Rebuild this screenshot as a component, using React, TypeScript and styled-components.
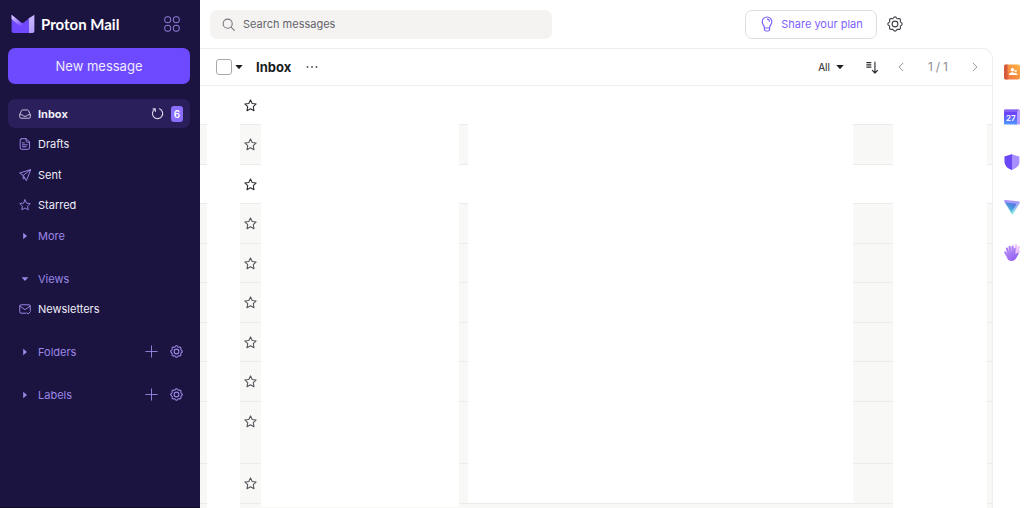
import React from 'react';
import styled, { createGlobalStyle } from 'styled-components';

const GlobalStyle = createGlobalStyle`
  *, *::before, *::after { box-sizing: border-box; }
  body { margin: 0; background: #fff; overflow: hidden; }
  body, button, input, select { font-family: Inter, 'Liberation Sans', sans-serif; }
  button { margin: 0; padding: 0; border: 0; background: none; color: inherit; cursor: pointer; }
  svg { display: block; flex: none; }
  h1, ul { margin: 0; padding: 0; }
  ul { list-style: none; }
`;

const Shell = styled.div`
  display: grid;
  grid-template-columns: 200px minmax(0, 1fr);
  height: 100vh;
  overflow: hidden;
  color: #1b1b22;
`;

/* Sidebar */

const Sidebar = styled.aside`
  display: flex;
  flex-direction: column;
  padding: 0 10px 0 8px;
  border-bottom: 1px solid #0f0a26;
  background: #1b1340;
  color: #f1effa;
`;

const Brand = styled.div`
  display: flex;
  align-items: center;
  justify-content: space-between;
  height: 48px;
  padding: 0 10px 0 3px;
`;

const BrandLink = styled.a`
  display: flex;
  align-items: center;
  gap: 6px;
  color: #fff;
  font: 700 15px/20px Lato, Inter, sans-serif;
  text-decoration: none;
`;

const ComposeButton = styled.button`
  height: 36px;
  border-radius: 7px;
  background: #6d4aff;
  color: #efeaff;
  font-size: 13px;
  line-height: 20px;
`;

const Nav = styled.nav`
  display: flex;
  flex-direction: column;
  gap: 14px;
  padding-top: 15px;
`;

const NavGroup = styled.ul`
  display: flex;
  flex-direction: column;
  gap: 2px;
`;

const NavRow = styled.li<{ $active?: boolean; $heading?: boolean }>`
  display: flex;
  align-items: center;
  height: ${p => (p.$active || p.$heading ? 29 : 28)}px;
  padding: 0 7px 0 11px;
  border-radius: 7px;
  background: ${p => (p.$active ? '#2a1f5a' : 'transparent')};
  color: ${p => (p.$heading ? '#9c88e6' : '#efedf7')};
  font-weight: ${p => (p.$active ? 700 : 400)};
  &:nth-child(3) { height: 29px; }
`;

const navLabel = `
  display: flex;
  flex: 1;
  align-items: center;
  gap: 7px;
  color: inherit;
  font-size: 11px;
  font-weight: inherit;
  line-height: 16px;
  text-align: left;
  text-decoration: none;
`;

const NavLink = styled.a<{ $tint: string }>`
  ${navLabel}
  svg { color: ${p => p.$tint}; }
`;

const NavToggle = styled.button`
  ${navLabel}
`;

const IconButton = styled.button<{ $color: string; $gap?: number }>`
  display: grid;
  place-items: center;
  margin-left: ${p => p.$gap ?? 0}px;
  color: ${p => p.$color};
`;

const Badge = styled.span`
  margin-left: 7px;
  width: 12px;
  border-radius: 3px;
  background: #8a6eff;
  color: #fff;
  font-size: 10px;
  font-weight: 600;
  line-height: 16px;
  text-align: center;
`;

/* Top bar */

const Main = styled.main`
  display: flex;
  flex-direction: column;
  min-width: 0;
  min-height: 0;
`;

const TopBar = styled.header`
  display: flex;
  flex: none;
  align-items: center;
  justify-content: space-between;
  height: 48px;
  padding: 0 121px 0 10px;
`;

const SearchBox = styled.label`
  display: flex;
  flex: 0 1 342px;
  align-items: center;
  gap: 8px;
  height: 29px;
  padding: 0 12px;
  border-radius: 7px;
  background: #f4f3f2;
  color: #77757a;
`;

const SearchInput = styled.input`
  flex: 1;
  min-width: 0;
  padding: 0;
  border: 0;
  outline: 0;
  background: transparent;
  font-size: 11px;
  line-height: 16px;
  &::placeholder { color: #65636a; opacity: 1; }
`;

const TopActions = styled.div`
  display: flex;
  align-items: center;
  gap: 10px;
`;

const ShareButton = styled.button`
  display: flex;
  align-items: center;
  justify-content: center;
  gap: 6px;
  width: 132px;
  height: 29px;
  border: 1px solid #dfdde3;
  border-radius: 7px;
  color: #7d5fff;
  font-size: 11px;
  line-height: 16px;
`;

/* Message list */

const Workspace = styled.div`
  display: flex;
  flex: 1;
  min-height: 0;
`;

const Panel = styled.section`
  display: flex;
  flex: 1;
  flex-direction: column;
  min-width: 0;
  overflow: hidden;
  border: solid #f0eeeb;
  border-width: 1px 1px 0 0;
  border-top-right-radius: 10px;
`;

const Toolbar = styled.div`
  display: flex;
  flex: none;
  align-items: center;
  justify-content: space-between;
  height: 37px;
  padding: 0 11px 0 16px;
  border-bottom: 1px solid #efeff0;
`;

const ToolGroup = styled.div`
  display: flex;
  align-items: center;
`;

const SelectAll = styled.input`
  appearance: none;
  width: 16px;
  height: 16px;
  margin: 0 3px 0 0;
  border: 1px solid #a9a8ad;
  border-radius: 3px;
  background: #fff;
`;

const Title = styled.h1`
  margin: 0 15px 0 13px;
  font-size: 13px;
  font-weight: 700;
  line-height: 20px;
`;

const FilterButton = styled.button`
  display: flex;
  align-items: center;
  gap: 6px;
  margin-right: 22px;
  font-size: 10px;
  line-height: 16px;
`;

const PageCount = styled.span`
  display: flex;
  gap: 3px;
  margin: 0 21px;
  color: #8f8d93;
  font-size: 12px;
  line-height: 16px;
`;

const Messages = styled.ul`
  flex: 1;
  min-height: 0;
  overflow: hidden;
`;

const Columns = styled.li`
  display: grid;
  grid-template-columns: 7px 33px 21px minmax(0, 198fr) 9px minmax(0, 385fr) 40px 94px 5px;
`;

const Message = styled(Columns)<{ $read: boolean; $tall?: boolean }>`
  height: ${p => (p.$tall ? 62 : 39)}px;
  background: ${p => (p.$read ? '#f8f8f6' : '#fff')};
  &:nth-child(even) { height: 40px; }
`;

const Tail = styled(Columns)`
  height: 40px;
  background: #f8f8f6;
`;

const Strip = styled.div`
  border-bottom: 1px solid #ebebea;
`;

const StarCell = styled(Strip)`
  display: flex;
  justify-content: center;
  align-items: flex-start;
  padding-top: 13px;
`;

const Blank = styled.div`
  background: #fff;
`;

const LastBlank = styled(Strip)`
  background: #fff;
`;

const ShortBlank = styled(Blank)`
  height: 3px;
`;

/* App rail */

const Rail = styled.nav`
  display: flex;
  flex: none;
  flex-direction: column;
  align-items: center;
  gap: 29px;
  width: 31px;
  padding: 16px 0 0 7px;
`;

type IconProps = { size?: number; width?: number; children: React.ReactNode };

const Icon = ({ size = 12, width = 1.2, children }: IconProps) => (
  <svg width={size} height={size} viewBox="0 0 16 16" fill="none" stroke="currentColor"
    strokeWidth={width} strokeLinecap="round" strokeLinejoin="round" aria-hidden="true">
    {children}
  </svg>
);

/* Cog outline: a circle whose radius swells eight times per turn. */
const GEAR = `M${Array.from({ length: 96 }, (_, i) => {
  const a = (i / 96) * Math.PI * 2;
  const r = 6.5 + 0.65 * Math.cos(8 * a);
  return `${(8 + r * Math.sin(a)).toFixed(2)} ${(8 - r * Math.cos(a)).toFixed(2)}`;
}).join('L')}Z`;

const Gear = ({ size, width = 1.1 }: { size: number; width?: number }) => (
  <Icon size={size} width={width}>
    <path d={GEAR} />
    <circle cx="8" cy="8" r="2.9" />
  </Icon>
);

const Star = ({ size = 12, width = 1.2 }: { size?: number; width?: number }) => (
  <Icon size={size} width={width}>
    <path d="M8 1.1 10.1 5.5 15 6.1 11.4 9.5 12.3 14.4 8 12 3.7 14.4 4.6 9.5 1 6.1 5.9 5.5Z" />
  </Icon>
);

const Caret = ({ down }: { down?: boolean }) => (
  <svg width="12" height="12" viewBox="0 0 12 12" fill="currentColor" aria-hidden="true">
    <path d={down ? 'M2.6 4.2h6.8L6 8Z' : 'M4.2 2.8v6.4L8 6Z'} />
  </svg>
);

const SmallCaret = () => (
  <svg width="8" height="6" viewBox="0 0 8 6" fill="currentColor" aria-hidden="true">
    <path d="M.3 1h7.4L4 5.2Z" />
  </svg>
);

const Chevron = ({ right }: { right?: boolean }) => (
  <Icon size={12} width={1.3}>
    <path d={right ? 'm5.5 3 5 5-5 5' : 'm10.5 3-5 5 5 5'} />
  </Icon>
);

const InboxIcon = () => (
  <Icon width={1.3}>
    <path d="M.8 9.2 3.2 3.6Q3.6 2.6 4.7 2.6h6.6q1.1 0 1.5 1l2.4 5.6v2.6q0 1.8-1.8 1.8H2.6Q.8 13.6.8 11.8ZM.9 9.1h3.4q.5 0 .8.6.7 1.3 1.5 1.3h2.8q.8 0 1.5-1.3.3-.6.8-.6h3.4" />
  </Icon>
);

const DraftIcon = () => (
  <Icon width={1.3}>
    <path d="M3.4.9h6.1L14 5.4v7.9q0 1.8-1.8 1.8H3.4q-1.8 0-1.8-1.8V2.7Q1.6.9 3.4.9ZM9.4 1v2.8q0 1.8 1.8 1.8h2.7M4.5 6.5h2.6M4.5 9.1h6.6M4.5 11.7h5" />
  </Icon>
);

const SentIcon = () => (
  <Icon width={1.3}>
    <path d="M15.2 1 .9 5.4 5.6 8.6 9.6 15.2ZM15.2 1 5.6 8.6v4.6l2.2-1.3" />
  </Icon>
);

const NewsletterIcon = () => (
  <Icon width={1.3}>
    <path d="M9.2 13.6H2.8Q1 13.6 1 11.8V4.2q0-1.8 1.8-1.8h10.4q1.8 0 1.8 1.8v5.6M1.3 4.2 6.8 8.2q1.2.8 2.4 0l5.5-4M10.6 13.2l1.6 1.5 3-3.2" />
  </Icon>
);

const BulbIcon = () => (
  <Icon size={16} width={1.2}>
    <path d="M5.4 11.4C5.4 9.7 3.2 8.6 3.2 5.8a4.8 4.8 0 0 1 9.6 0C12.8 8.6 10.6 9.7 10.6 11.4M5.4 11.4v1.8q0 1.8 1.8 1.8h1.6q1.8 0 1.8-1.8v-1.8M5.400 12h5.200M8.400 3.200q1.800.2 2 2" />
  </Icon>
);

const Logo = () => (
  <svg width="24" height="20" viewBox="0 0 24 20" aria-hidden="true">
    <defs>
      <linearGradient id="flap" x1="0" y1="0" x2="1" y2="1">
        <stop offset="0" stopColor="#e3d9ff" />
        <stop offset=".9" stopColor="#7341ff" />
      </linearGradient>
      <linearGradient id="side" x1="0" y1="0" x2="0" y2="1">
        <stop offset="0" stopColor="#c9b9ff" />
        <stop offset="1" stopColor="#b49cff" />
      </linearGradient>
    </defs>
    <path d="M17.5 4.6 23.4.8V17q0 2-2 2h-4Z" fill="url(#side)" />
    <path d="M.6.8 10 8.6q1.5 1.2 3 0L17.8 4.5V19H2.6q-2 0-2-2Z" fill="#7048ff" />
    <path d="M.6.8 10 8.6q1.5 1.2 3 0L13.7 9.6l-2 1.7q-2 1.5-4 0L.6 5Z" fill="url(#flap)" />
  </svg>
);

const AppsIcon = () => (
  <svg width="16" height="16" viewBox="0 0 16 16" fill="none" stroke="#9c88e6" aria-hidden="true">
    <rect x=".8" y=".8" width="5.8" height="5.8" rx="2" />
    <rect x="9.4" y=".8" width="5.8" height="5.8" rx="2" />
    <rect x=".8" y="9.4" width="5.8" height="5.8" rx="2" />
    <rect x="9.4" y="9.4" width="5.8" height="5.8" rx="2" />
  </svg>
);

const ContactsApp = () => (
  <svg width="16" height="16" viewBox="0 0 16 16" aria-hidden="true">
    <defs>
      <linearGradient id="contacts" x1="0" y1="1" x2="1" y2="0">
        <stop offset="0" stopColor="#ee6b45" />
        <stop offset="1" stopColor="#ffb440" />
      </linearGradient>
    </defs>
    <rect y=".5" width="16" height="15" rx="2" fill="url(#contacts)" />
    <path d="M2 .5h1.5v15H2q-2 0-2-2v-11q0-2 2-2Z" fill="#d55a3c" />
    <circle cx="8.4" cy="5.8" r="1.8" fill="#fff" />
    <circle cx="11.6" cy="7" r="1.3" fill="#ffe9d5" />
    <path d="M5 11q.2-2.8 3.4-2.8 1.4 0 2 .8 2.9-.4 3.3 2Z" fill="#fff" />
  </svg>
);

const DayNumber = styled.text`
  font: 600 8px Inter, sans-serif;
  fill: #fff;
`;

const CalendarApp = () => (
  <svg width="16" height="16" viewBox="0 0 16 16" aria-hidden="true">
    <defs>
      <linearGradient id="calendar" x1="0" y1="0" x2="0" y2="1">
        <stop offset=".2" stopColor="#6b45fa" />
        <stop offset="1" stopColor="#4f9bff" />
      </linearGradient>
    </defs>
    <path d="M1 .5h14q1 0 1 1v14H10V4H0V1.5q0-1 1-1Z" fill="#b79fff" />
    <path d="M1 .5h14L13 3H0V1.5q0-1 1-1Z" fill="#8461f5" />
    <path d="M0 3h13v12.5H0Z" fill="url(#calendar)" />
    <DayNumber x="2" y="12">27</DayNumber>
  </svg>
);

const ShieldApp = () => (
  <svg width="16" height="16" viewBox="0 0 16 16" aria-hidden="true">
    <path d="M8 .2 15.4 2.6V8q0 5-7.4 8Q.6 13 .6 8V2.6Z" fill="#a78fff" />
    <path d="M8 .2V16Q.6 13 .6 8V2.6Z" fill="#6b48f5" />
  </svg>
);

const VpnApp = () => (
  <svg width="16" height="16" viewBox="0 0 16 16" aria-hidden="true">
    <defs>
      <linearGradient id="vpnBack" x1="0" y1="0" x2="0" y2="1">
        <stop offset="0" stopColor="#a98bfa" />
        <stop offset="1" stopColor="#86efe4" />
      </linearGradient>
      <linearGradient id="vpnFront" x1="1" y1="0" x2=".3" y2="1">
        <stop offset="0" stopColor="#5b63ea" />
        <stop offset="1" stopColor="#3bc4d2" />
      </linearGradient>
    </defs>
    <path d="M1.3 1 14.8 2.4q1.6.2.9 1.7L9.2 14.8q-1 1.3-1.9 0L.3 2.6Q-.3 1 1.3 1Z" fill="url(#vpnBack)" />
    <path d="M1 3.6 11 4.6q1.7.3.8 1.8L7.6 12.8Z" fill="url(#vpnFront)" />
  </svg>
);

const WaveApp = () => (
  <svg width="16" height="18" viewBox="0 0 16 18" fill="none" strokeLinecap="round" aria-hidden="true">
    <defs>
      <linearGradient id="hand" x1="0" y1="0" x2="1" y2="1">
        <stop offset="0" stopColor="#b48af5" />
        <stop offset="1" stopColor="#8b55f0" />
      </linearGradient>
    </defs>
    <path d="M9 1.8 10 6M12 1.2v5M14.6 3 13.4 8M15 7.5 12 12M12 6v5" stroke="#ecc4fb" strokeWidth="2.2" />
    <path d="M3.8 8 3 4.5M6 7 5.6 2.8M8.4 7V3M10.4 8.5 10.8 5M3.5 12 1.2 8.5" stroke="#ad80f5" strokeWidth="2.2" />
    <path d="M3 7.5 10.5 7l1.2 3.3 2.1-1.9q1.3.6.4 2L11.7 15q-2 2.4-5 2-3-.6-4-3.5Z" fill="url(#hand)" />
  </svg>
);

const railApps = [
  { name: 'Contacts', Art: ContactsApp },
  { name: 'Calendar', Art: CalendarApp },
  { name: 'Security center', Art: ShieldApp },
  { name: 'VPN', Art: VpnApp },
  { name: 'Getting started', Art: WaveApp },
];

const folders = [
  { name: 'Drafts', Art: DraftIcon },
  { name: 'Sent', Art: SentIcon },
  { name: 'Starred', Art: Star },
];

const messages = [
  { read: false }, { read: true }, { read: false }, { read: true }, { read: true },
  { read: true }, { read: true }, { read: true }, { read: true, tall: true }, { read: true },
];

const Section = ({ name }: { name: string }) => (
  <NavGroup>
    <NavRow as="li" $heading>
      <NavToggle aria-expanded="false"><Caret />{name}</NavToggle>
      <IconButton $color="#9c88e6" aria-label={`Add to ${name}`}>
        <Icon size={13} width={1.1}><path d="M8 1v14M1 8h14" /></Icon>
      </IconButton>
      <IconButton $color="#9c88e6" $gap={12} aria-label={`${name} settings`}><Gear size={13} width={1.3} /></IconButton>
    </NavRow>
  </NavGroup>
);

export default function App() {
  return (
    <>
      <GlobalStyle />
      <Shell>
        <Sidebar>
          <Brand>
            <BrandLink href="#"><Logo />Proton Mail</BrandLink>
            <IconButton $color="#9c88e6" aria-label="Proton apps"><AppsIcon /></IconButton>
          </Brand>
          <ComposeButton>New message</ComposeButton>
          <Nav aria-label="Mailboxes">
            <NavGroup>
              <NavRow $active>
                <NavLink href="#inbox" $tint="#c9c4dd"><InboxIcon />Inbox</NavLink>
                <IconButton $color="#d9d5ea" aria-label="Refresh">
                  <Icon size={13} width={1.4}>
                    <path d="M10.500 2.200A6.300 6.300 0 1 1 5 2.500M5.300 5.300V2.200H2.400" />
                  </Icon>
                </IconButton>
                <Badge>6</Badge>
              </NavRow>
              {folders.map(({ name, Art }) => (
                <NavRow key={name}>
                  <NavLink href={`#${name}`} $tint="#9c88e6"><Art />{name}</NavLink>
                </NavRow>
              ))}
              <NavRow $heading>
                <NavToggle aria-expanded="false"><Caret />More</NavToggle>
              </NavRow>
            </NavGroup>
            <NavGroup>
              <NavRow $heading>
                <NavToggle aria-expanded="true"><Caret down />Views</NavToggle>
              </NavRow>
              <NavRow>
                <NavLink href="#newsletters" $tint="#9c88e6"><NewsletterIcon />Newsletters</NavLink>
              </NavRow>
            </NavGroup>
            <Section name="Folders" />
            <Section name="Labels" />
          </Nav>
        </Sidebar>
        <Main>
          <TopBar>
            <SearchBox>
              <Icon size={13} width={1.3}>
                <circle cx="7" cy="7" r="5.6" />
                <path d="m11.2 11.2 4 4" />
              </Icon>
              <SearchInput type="search" placeholder="Search messages" aria-label="Search messages" />
            </SearchBox>
            <TopActions>
              <ShareButton><BulbIcon />Share your plan</ShareButton>
              <IconButton $color="#3f3e44" aria-label="Settings"><Gear size={16} /></IconButton>
            </TopActions>
          </TopBar>
          <Workspace>
            <Panel>
              <Toolbar>
                <ToolGroup>
                  <SelectAll type="checkbox" aria-label="Select all messages" />
                  <IconButton $color="#1b1b22" aria-label="More selections"><SmallCaret /></IconButton>
                  <Title>Inbox</Title>
                  <IconButton $color="#4b4a50" aria-label="More options">
                    <svg width="12" height="4" viewBox="0 0 12 4" fill="currentColor" aria-hidden="true">
                      <circle cx="1.5" cy="2" r=".9" /><circle cx="6" cy="2" r=".9" /><circle cx="10.5" cy="2" r=".9" />
                    </svg>
                  </IconButton>
                </ToolGroup>
                <ToolGroup>
                  <FilterButton>All<SmallCaret /></FilterButton>
                  <IconButton $color="#2c2b31" aria-label="Sort">
                    <Icon size={13} width={1.4}>
                      <path d="M1 2h5M1 4.8h5M1 7.6h5M11 1.2v13.5M7.8 11.6l3.2 3.2 3.2-3.2" />
                    </Icon>
                  </IconButton>
                  <IconButton $color="#8f8d93" $gap={16} aria-label="Previous page"><Chevron /></IconButton>
                  <PageCount><span>1</span><span>/</span><span>1</span></PageCount>
                  <IconButton $color="#8f8d93" aria-label="Next page"><Chevron right /></IconButton>
                </ToolGroup>
              </Toolbar>
              <Messages>
                {messages.map((m, i) => (
                  <Message key={i} $read={m.read} $tall={m.tall}>
                    <Strip />
                    <Blank />
                    <StarCell>
                      <IconButton $color={m.read ? '#55545a' : '#2c2b31'} aria-label="Star message">
                        <Star size={13} width={1.3} />
                      </IconButton>
                    </StarCell>
                    <Blank />
                    <Strip />
                    {i === messages.length - 1 ? <LastBlank /> : <Blank />}
                    <Strip />
                    <Blank />
                    <Strip />
                  </Message>
                ))}
                <Tail>
                  <span /><Blank /><span /><ShortBlank /><span /><span /><span /><Blank /><span />
                </Tail>
              </Messages>
            </Panel>
            <Rail aria-label="Side panel">
              {railApps.map(({ name, Art }) => (
                <IconButton key={name} $color="#6d4aff" aria-label={name}><Art /></IconButton>
              ))}
            </Rail>
          </Workspace>
        </Main>
      </Shell>
    </>
  );
}
